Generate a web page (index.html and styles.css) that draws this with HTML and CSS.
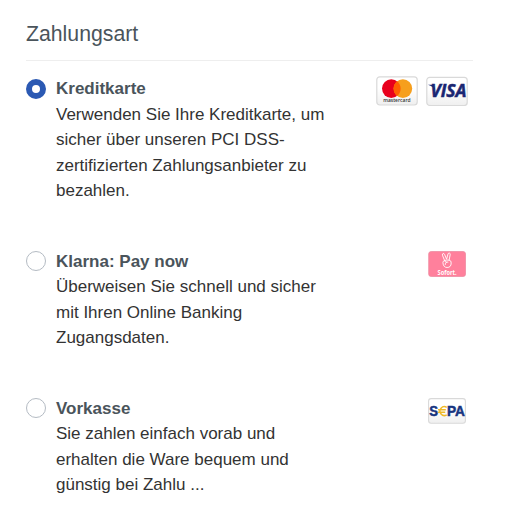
FILE: index.html
```html
<!DOCTYPE html>
<html lang="de">
<head>
  <meta charset="UTF-8">
  <meta name="viewport" content="width=device-width, initial-scale=1.0">
  <title>Zahlungsart</title>
  <link rel="stylesheet" href="styles.css">
</head>
<body>
  <main class="payment">
    <h1 class="payment-title">Zahlungsart</h1>

    <!-- Credit card -->
    <label class="option">
      <input class="option-radio" type="radio" name="payment" checked>
      <span class="option-text">
        <strong>Kreditkarte</strong>
        <span>Verwenden Sie Ihre Kreditkarte, um<br>sicher über unseren PCI DSS-<br>zertifizierten Zahlungsanbieter zu<br>bezahlen.</span>
      </span>
      <span class="option-logos">
        <svg class="logo-card" viewBox="0 0 42 30">
          <defs>
            <linearGradient id="card" x1="0" y1="0" x2="0" y2="1">
              <stop offset="0.4" stop-color="#fff"/>
              <stop offset="1" stop-color="#efefef"/>
            </linearGradient>
          </defs>
          <rect x="0.8" y="0.8" width="40.4" height="28.2" rx="3" fill="url(#card)" stroke="#d9d9d9" stroke-width="1.2"/>
          <circle cx="15.3" cy="12.6" r="9.3" fill="#e8001c"/>
          <circle cx="26.9" cy="12.6" r="9.3" fill="#f69f1d"/>
          <path d="M21.1 5.3a9.3 9.3 0 0 1 0 14.6a9.3 9.3 0 0 1 0-14.6z" fill="#ff5f00"/>
          <text class="mastercard-name" x="7.2" y="26.3" textLength="27.4" lengthAdjust="spacingAndGlyphs">mastercard</text>
        </svg>
        <svg class="logo-card" viewBox="0 0 42 30">
          <rect x="0.8" y="1.3" width="40.4" height="28.2" rx="3" fill="url(#card)" stroke="#d9d9d9" stroke-width="1.2"/>
          <path d="M2 8.8h5.500l2 6C8 12 5.500 9.800 2 8.800z" fill="#1a2672"/>
          <text class="visa-name" x="4.500" y="21.300" textLength="36" lengthAdjust="spacingAndGlyphs">VISA</text>
        </svg>
      </span>
    </label>

    <!-- Klarna -->
    <label class="option">
      <input class="option-radio" type="radio" name="payment">
      <span class="option-text">
        <strong>Klarna: Pay now</strong>
        <span>Überweisen Sie schnell und sicher<br>mit Ihren Online Banking<br>Zugangsdaten.</span>
      </span>
      <span class="option-logos option-logos-small">
        <svg class="logo-small" viewBox="0 0 38 26">
          <rect x="0.7" y="0.5" width="36.800" height="25" rx="2.500" fill="#ff809c" stroke="#ee8ca2" stroke-width="0.800"/>
          <path class="hand" d="M16.600 9.500L14.400 4.200q-.3-1.500.8-1.700q1-.1 1.300.8L18.600 8.200L20 3q.4-1.200 1.400-.9q1.100.3.8 1.500L21.100 9.200M16.600 9.500q-1.900.4-1.700 2.200q.5 4.800 4.200 4.800q4 0 4.100-4.500q.2-2.500-2.100-2.800q-2.300-.5-4.500.3q0 2.200 3.300 1.700M18.500 11.200q-1.300.8-1.300 2.300"/>
          <text class="sofort-name" x="9.600" y="23.500" textLength="19" lengthAdjust="spacingAndGlyphs">Sofort.</text>
        </svg>
      </span>
    </label>

    <!-- Prepayment -->
    <label class="option">
      <input class="option-radio" type="radio" name="payment">
      <span class="option-text">
        <strong>Vorkasse</strong>
        <span>Sie zahlen einfach vorab und<br>erhalten die Ware bequem und<br>günstig bei Zahlu ...</span>
      </span>
      <span class="option-logos option-logos-small">
        <svg class="logo-small" viewBox="0 0 38 26">
          <rect x="0.6" y="0.6" width="36.800" height="24.600" rx="2.500" fill="url(#card)" stroke="#d9d9d9" stroke-width="1.100"/>
          <text class="sepa-name" x="1.200" y="18" textLength="8.800" lengthAdjust="spacingAndGlyphs">S</text>
          <path d="M18.700 9.300A4.400 4.400 0 1 0 18.700 16.800M10 11.800h7.800M9.800 14.200h7.400" fill="none" stroke="#f0b928" stroke-width="1.500"/>
          <text class="sepa-name" x="19" y="18" textLength="18" lengthAdjust="spacingAndGlyphs">PA</text>
        </svg>
      </span>
    </label>
  </main>
</body>
</html>
```

FILE: styles.css
```css
body {
  margin: 0;
  background-color: #fff;
  color: #333;
  font-family: "Liberation Sans", Arial, sans-serif;
  font-size: 17px;
  line-height: 25.5px;
}
.payment {
  width: 447px;
  padding: 18px 0 0 26px;
}
.payment-title {
  margin: 0 0 15px;
  padding-bottom: 10px;
  border-bottom: 1px solid #eee;
  color: #4a545b;
  font-size: 21.25px;
  font-weight: normal;
  line-height: 32px;
}
.option {
  display: flex;
  align-items: flex-start;
  margin-bottom: 45px;
  padding-right: 5px;
}
.option-radio {
  appearance: none;
  flex: none;
  box-sizing: border-box;
  width: 20px;
  height: 20px;
  margin: 2.8px 10px 0 0;
  border: 1px solid #b4bbc3;
  border-radius: 50%;
  background-color: #fff;
}
.option-radio:checked {
  border: 6px solid #2b59b3;
}
.option-text {
  flex: 1;
}
.option-text strong {
  display: block;
  color: #4a545b;
}
.option-logos {
  display: flex;
  gap: 8px;
}
.option-logos-small {
  padding: 2.8px 2px 0 0;
}
.logo-card {
  width: 42px;
  height: 30px;
}
.logo-small {
  width: 38px;
  height: 26px;
}
.mastercard-name {
  fill: #333;
  font-family: "Open Sans", sans-serif;
  font-size: 5.5px;
  font-weight: 600;
}
.visa-name {
  fill: #1a2672;
  stroke: #1a2672;
  stroke-width: 0.5;
  font-family: "Open Sans", sans-serif;
  font-size: 17px;
  font-style: italic;
  font-weight: bold;
}
.hand {
  fill: none;
  stroke: #fff;
  stroke-width: 0.9;
  stroke-linecap: round;
  stroke-linejoin: round;
}
.sofort-name {
  fill: #fff;
  font-family: "Open Sans", sans-serif;
  font-size: 6.2px;
  font-weight: bold;
}
.sepa-name {
  fill: #17347f;
  stroke: #17347f;
  stroke-width: 0.5;
  font-family: "Liberation Sans", Arial, sans-serif;
  font-size: 14px;
  font-weight: bold;
}
```
